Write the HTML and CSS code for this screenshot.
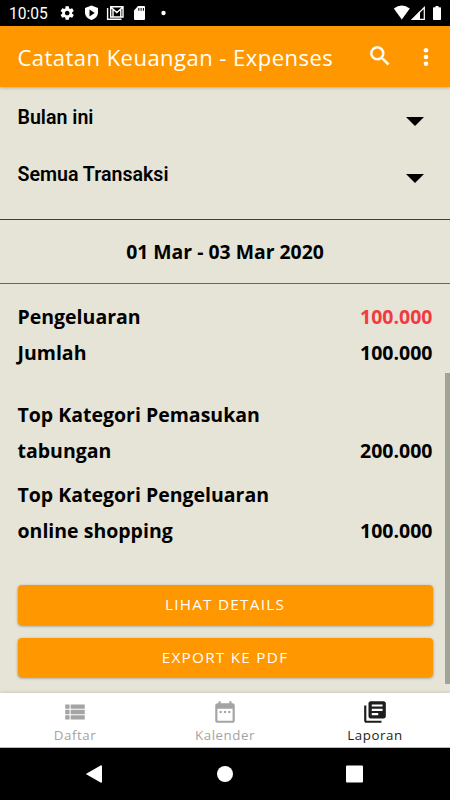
FILE: index.html
```html
<!DOCTYPE html>
<html lang="id">
<head>
<meta charset="utf-8">
<title>Catatan Keuangan - Expenses</title>
<link rel="stylesheet" href="styles.css">
</head>
<body>
<div class="phone">
  <div class="status">
    <span class="clock">10:05</span>
    <svg class="status-icons" width="122" height="26" viewBox="0 0 122 26" fill="#fff">
      <g transform="translate(.2 5) scale(.667)"><path d="M19.43 12.98c.04-.32.07-.64.07-.98s-.03-.66-.07-.98l2.11-1.65c.19-.15.24-.42.12-.64l-2-3.46c-.12-.22-.39-.3-.61-.22l-2.49 1c-.52-.4-1.08-.73-1.69-.98l-.38-2.65C14.46 2.18 14.25 2 14 2h-4c-.25 0-.46.18-.49.42l-.38 2.65c-.61.25-1.17.59-1.69.98l-2.49-1c-.23-.09-.49 0-.61.22l-2 3.460c-.13.22-.07.49.12.64l2.11 1.65c-.04.32-.07.65-.07.98s.03.66.07.98l-2.11 1.65c-.19.15-.24.42-.12.64l2 3.46c.12.22.39.3.61.22l2.49-1c.52.4 1.08.73 1.69.98l.38 2.65c.03.24.24.42.49.42h4c.25 0 .46-.18.49-.42l.38-2.65c.61-.25 1.17-.59 1.69-.98l2.49 1c.23.09.49 0 .61-.22l2-3.46c.12-.22.07-.49-.12-.64l-2.11-1.65zM12 15.500c-1.930 0-3.500-1.570-3.500-3.500s1.570-3.500 3.500-3.500 3.500 1.570 3.500 3.500-1.570 3.500-3.500 3.500z"/></g>
      <path fill-rule="evenodd" d="M32.500 5.500 39 8v4.500c0 3.500-2.600 6.400-6.500 7.500C28.600 18.900 26 16 26 12.500V8zM30.500 9.500v7l5.200-3.500z"/>
      <path d="M48.600 8v11.200H62.500" fill="none" stroke="#fff" stroke-width="1.400"/>
      <path d="M51.700 17V6.700H64V17zM52 7.300l5.800 5.200L63.700 7.300M54 17V9.500M61.800 17V9.500" fill="none" stroke="#fff" stroke-width="1.400"/>
      <path fill-rule="evenodd" d="M79 6h6q1 0 1 1v12q0 1-1 1H76q-1 0-1-1v-8.500zM79.300 8v2.700h1V8zm2.300 0v2.700h1V8zm2.300 0v2.700h1V8z"/>
      <circle cx="104.500" cy="13" r="2.200"/>
    </svg>
    <svg class="signal" width="50" height="26" viewBox="0 0 50 26" fill="#fff">
      <path d="M.8 8.600Q8.800 2.600 16.800 8.600L8.800 19.500z"/>
      <path d="M19.500 19.300 31.300 7.500V19.300z" fill="none" stroke="#fff" stroke-width="1.200"/><path d="M18 20 27 11V20z"/>
      <path d="M42.500 6h3v1.300h1.800q.7 0 .7.700v11.300q0 .7-.7.700h-6.600q-.7 0-.7-.7V8q0-.7.7-.7h1.800z"/>
    </svg>
  </div>
  <header class="appbar">
    <h1>Catatan Keuangan - Expenses</h1>
    <svg class="search" width="26" height="26" viewBox="0 0 24 24" fill="#fff" stroke="#fff" stroke-width=".3"><path d="M15.500 14h-.79l-.28-.27A6.471 6.471 0 0 0 16 9.500 6.500 6.500 0 1 0 9.500 16c1.610 0 3.090-.59 4.230-1.570l.27.28v.79l5 4.990L20.490 19l-4.990-5zm-6 0C7.010 14 5 11.990 5 9.500S7.010 5 9.500 5 14 7.010 14 9.500 11.990 14 9.500 14z"/></svg>
    <svg width="6" height="20" viewBox="0 0 6 20" fill="#fff"><circle cx="3" cy="3.300" r="2.300"/><circle cx="3" cy="10" r="2.300"/><circle cx="3" cy="16.700" r="2.300"/></svg>
  </header>
  <main class="content">
    <div class="picker"><span>Bulan ini</span><svg width="18" height="9" viewBox="0 0 18 9"><path d="M0 0h18L9 9z"/></svg></div>
    <div class="picker"><span>Semua Transaksi</span><svg width="18" height="9" viewBox="0 0 18 9"><path d="M0 0h18L9 9z"/></svg></div>
    <div class="range"><span>01 Mar - 03 Mar 2020</span></div>
    <div class="report">
      <div class="row"><span>Pengeluaran</span><span class="red">100.000</span></div>
      <div class="row"><span>Jumlah</span><span>100.000</span></div>
      <div class="row income"><span>Top Kategori Pemasukan</span></div>
      <div class="row"><span>tabungan</span><span>200.000</span></div>
      <div class="row expense"><span>Top Kategori Pengeluaran</span></div>
      <div class="row"><span>online shopping</span><span>100.000</span></div>
    </div>
    <div class="actions">
      <button>LIHAT DETAILS</button>
      <button>EXPORT KE PDF</button>
    </div>
    <div class="scrollbar"></div>
  </main>
  <nav class="tabs">
    <a><svg width="26" height="26" viewBox="0 0 24 24"><path d="M3 14h4v-4H3v4zm0 5h4v-4H3v4zM3 9h4V5H3v4zm5 5h13v-4H8v4zm0 5h13v-4H8v4zM8 5v4h13V5H8z"/></svg><span>Daftar</span></a>
    <a><svg width="26" height="26" viewBox="0 0 24 24"><path d="M9 11H7v2h2v-2zm4 0h-2v2h2v-2zm4 0h-2v2h2v-2zm2-7h-1V2h-2v2H8V2H6v2H5c-1.110 0-1.990.9-1.990 2L3 20a2 2 0 0 0 2 2h14c1.100 0 2-.9 2-2V6c0-1.100-.9-2-2-2zm0 16H5V9h14v11z"/></svg><span>Kalender</span></a>
    <a class="active"><svg width="26" height="26" viewBox="0 0 24 24"><path d="M4 6H2v14c0 1.100.9 2 2 2h14v-2H4V6zm16-4H8c-1.100 0-2 .9-2 2v12c0 1.100.9 2 2 2h12c1.100 0 2-.9 2-2V4c0-1.100-.9-2-2-2zm-1 9H9V9h10v2zm-4 4H9v-2h6v2zm4-8H9V5h10v2z"/></svg><span>Laporan</span></a>
  </nav>
  <div class="sysnav">
    <svg width="450" height="52" viewBox="0 0 450 52" fill="#fff"><path d="M85.800 26 101 17.300q1 0 1 1v15.400q0 1-1 1z"/><circle cx="225" cy="26" r="8"/><rect x="346" y="17.500" width="17" height="17" rx="1"/></svg>
  </div>
</div>
</body>
</html>
```
FILE: styles.css
```css
* { box-sizing: border-box; }
body { margin: 0; font-family: "Open Sans", sans-serif; }
.phone { width: 450px; height: 800px; display: flex; flex-direction: column; background: #e5e4d7; overflow: hidden; }
.status { height: 26px; flex: none; background: #000; color: #fff; display: flex; align-items: center; }
.clock { width: 59px; flex: none; font: 15.6px/26px Roboto, sans-serif; padding: 2px 0 0 9px; }
.status-icons { flex: none; }
.signal { margin-left: auto; margin-right: 7px; }
.appbar { height: 61px; flex: none; background: #ff9800; color: #fff; display: flex; align-items: center; padding: 0 21px 0 17.5px; box-shadow: 0 1px 3px rgba(0,0,0,.25); position: relative; }
.appbar h1 { margin: 0; flex: 1; font-size: 22px; line-height: 32px; font-weight: 400; letter-spacing: .47px; white-space: nowrap; }
.search { margin-right: 30px; margin-bottom: 1px; }
.content { flex: 1; min-height: 0; position: relative; }
.picker { height: 57px; display: flex; justify-content: space-between; padding: 19px 26px 0 17.5px; font: 600 19.6px/24px Roboto, sans-serif; }
.picker svg { margin-top: 10.6px; }
.range { height: 65px; margin-top: 18px; border-top: 1px solid #3f3f3b; border-bottom: 1px solid #666660; display: flex; align-items: center; justify-content: center; font-size: 19.4px; font-weight: 700; line-height: 26px; padding-top: 1px; }
.report { padding: 15px 17.5px 0; font-size: 19.5px; font-weight: 700; }
.row { height: 36px; line-height: 36px; display: flex; justify-content: space-between; }
.red { color: #f13b41; }
.income { margin-top: 26px; }
.expense { margin-top: 8.4px; }
.actions { padding: 36px 17.5px 0; display: flex; flex-direction: column; gap: 13px; }
.actions button { height: 39.5px; border: 0; border-radius: 4px; padding: 0; background: #ff9800; color: #fff; font: 15.3px/39.5px "Open Sans", sans-serif; letter-spacing: 1.25px; box-shadow: 0 1px 3px rgba(0,0,0,.4); }
.scrollbar { position: absolute; right: 0; top: 286px; width: 5px; height: 311px; background: #a2a398; }
.tabs { height: 55px; flex: none; background: #fff; border-bottom: 1px solid #bbb; display: flex; color: #a4a4a4; box-shadow: 0 -1px 3px rgba(0,0,0,.1); position: relative; }
.tabs a { flex: 1; display: flex; flex-direction: column; align-items: center; padding-top: 5.5px; font-size: 13.3px; line-height: 18px; letter-spacing: .55px; }
.tabs svg { fill: currentColor; margin-bottom: 1.5px; }
.tabs .active { color: #1d1d1d; }
.sysnav { height: 52px; flex: none; background: #000; }
```
